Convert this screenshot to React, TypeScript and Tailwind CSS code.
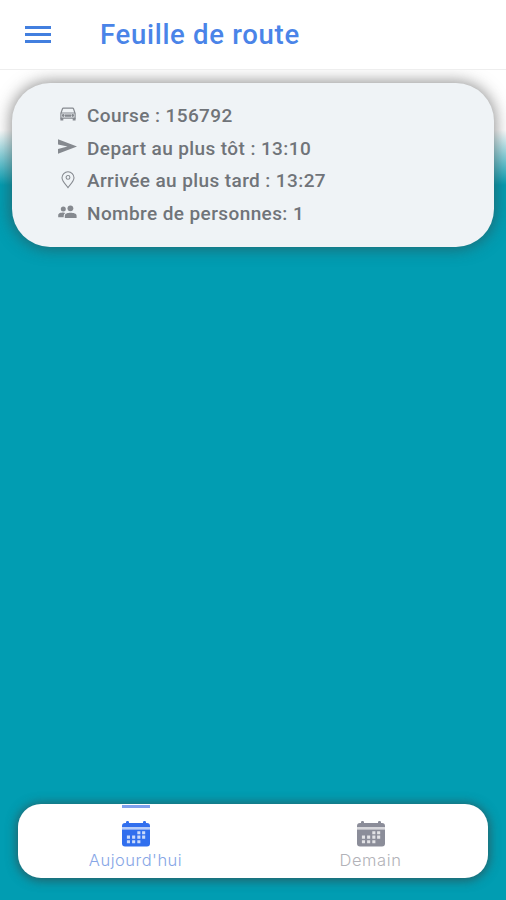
import { useState } from 'react';
import type { ReactNode } from 'react';

type Onglet = 'aujourdhui' | 'demain';

function CarIcon() {
  return (
    <svg width="16" height="15" viewBox="0 0 16 15" fill="none" stroke="currentColor" strokeWidth="1.2">
      <path d="M.9 6.3 2.5 1.8Q2.7 1.2 3.4 1.2H12.6Q13.3 1.2 13.5 1.8L15.1 6.3V11.2H.9ZM1.2 6H14.8" />
      <path d="M1 11v2h1.7V11M13.3 11v2h1.7V11" fill="currentColor" />
      <path d="M5 8.6h6" strokeWidth="2.4" />
      <circle cx="3.3" cy="8.5" r=".8" fill="currentColor" />
      <circle cx="12.7" cy="8.5" r=".8" fill="currentColor" />
    </svg>
  );
}

function SendIcon() {
  return (
    <svg width="19" height="16" viewBox="0 0 19 16" fill="currentColor">
      <path d="M0 .2 19 7.4 0 14.8V9.9L9.5 7.4 0 5.4Z" />
    </svg>
  );
}

function PinIcon() {
  return (
    <svg width="14" height="18" viewBox="0 0 14 18" fill="none" stroke="currentColor" strokeWidth="1.05">
      <path d="M7 16.6C5.6 14.4 1 10.4 1 6.7A6 5.9 0 0 1 13 6.7C13 10.4 8.4 14.4 7 16.6Z" />
      <circle cx="7" cy="6.4" r="1.9" />
    </svg>
  );
}

function PeopleIcon() {
  return (
    <svg width="19" height="14" viewBox="0 0 19 14" fill="currentColor">
      <circle cx="5.3" cy="3.9" r="2.5" />
      <circle cx="12.4" cy="3.3" r="2.9" />
      <path d="M6.8 13V10.8C6.8 8.6 9.8 7.8 12.6 7.8S18.6 8.6 18.6 10.8V13Z" />
      <path d="M.2 12.2V10.4C.2 8.2 2.9 7.6 5.2 7.6Q6.5 7.6 7.3 7.9Q5.7 9 5.7 10.8V12.2Z" />
    </svg>
  );
}

function CalendarIcon() {
  return (
    <svg width="28" height="26" viewBox="0 0 28 26">
      <path
        d="M4 2V1.2Q4 0 5.2 0H5.8Q7 0 7 1.2V2H21V1.2Q21 0 22.2 0H22.8Q24 0 24 1.2V2H25Q28 2 28 5V6H0V5Q0 2 3 2Z"
        fill="currentColor"
      />
      <path d="M0 6h28v2.5H0Z" fill="currentColor" opacity=".35" />
      <path d="M0 8.5h28V22.5Q28 25.5 25 25.5H3Q0 25.5 0 22.5Z" fill="currentColor" />
      <g fill="#fff" opacity=".75">
        <path d="M15.3 10.2h3.1v3.1h-3.1zM20.1 10.2h3.1v3.1h-3.1z" />
        <path d="M4.9 14.6H8v3.1H4.9zM10.1 14.6h3.1v3.1h-3.1zM15.3 14.6h3.1v3.1h-3.1zM20.1 14.6h3.1v3.1h-3.1z" />
        <path d="M4.9 19.2H8v3.1H4.9zM10.1 19.2h3.1v3.1h-3.1zM15.3 19.2h3.1v3.1h-3.1z" />
      </g>
    </svg>
  );
}

function Ligne({ icon, children }: { icon: ReactNode; children: ReactNode }) {
  return (
    <li className="flex h-[32.7px] items-center">
      <span className="mr-[9px] flex h-5 w-[21px] -translate-y-[2px] items-center justify-center text-[#85898f]">{icon}</span>
      <span className="whitespace-nowrap">{children}</span>
    </li>
  );
}

export default function FeuilleDeRoute() {
  const [onglet, setOnglet] = useState<Onglet>('aujourdhui');

  return (
    <div className="flex h-[900px] flex-col overflow-hidden bg-[#019db2] font-['Roboto',sans-serif]">
      <header className="flex h-[70px] shrink-0 items-center border-b border-[#eeeeee] bg-white pl-[25px]">
        <button aria-label="Menu" className="flex w-[26px] flex-col gap-[4px]">
          <span className="h-[2.7px] bg-[#427fdf]" />
          <span className="h-[2.7px] bg-[#427fdf]" />
          <span className="h-[2.7px] bg-[#427fdf]" />
        </button>
        <h1 className="ml-[49px] text-[27.5px] font-medium tracking-[0.7px] text-[#4a84e8]">Feuille de route</h1>
      </header>

      <main className="flex flex-1 flex-col justify-between overflow-hidden bg-[linear-gradient(to_bottom,#fff_0,#fff_60px,#019db2_115px)] pt-[13px] pb-[22px]">
        <section className="mx-[12px] h-[164px] rounded-[38px] bg-[#eff3f6] pt-[17px] pl-[45px] shadow-[0_0_16px_1px_rgba(60,60,60,0.6)]">
          <ul className="text-[19px] font-medium tracking-[0.4px] text-[#707479]">
            <Ligne icon={<CarIcon />}>Course : 156792</Ligne>
            <Ligne icon={<SendIcon />}>Depart au plus tôt : 13:10</Ligne>
            <Ligne icon={<PinIcon />}>Arrivée au plus tard : 13:27</Ligne>
            <Ligne icon={<PeopleIcon />}>Nombre de personnes: 1</Ligne>
          </ul>
        </section>

        <nav className="mx-[18px] flex h-[74px] rounded-[23px] bg-white font-['Inter',sans-serif] text-[16.5px] font-light shadow-[0_1px_11px_1px_rgba(60,60,60,0.7)]">
          <button
            onClick={() => setOnglet('aujourdhui')}
            className={`flex flex-1 flex-col items-center ${onglet === 'aujourdhui' ? 'text-[#316fee]' : 'text-[#8b8d99]'}`}
          >
            <span className={`mt-px mb-[13px] h-[3px] w-[28px] ${onglet === 'aujourdhui' ? 'bg-[#7fa1ed]' : ''}`} />
            <CalendarIcon />
            <span className={`mt-px tracking-[0.5px] ${onglet === 'aujourdhui' ? 'text-[#86a6e6]' : 'text-[#b2b2b8]'}`}>Aujourd'hui</span>
          </button>
          <button
            onClick={() => setOnglet('demain')}
            className={`flex flex-1 flex-col items-center ${onglet === 'demain' ? 'text-[#316fee]' : 'text-[#8b8d99]'}`}
          >
            <span className={`mt-px mb-[13px] h-[3px] w-[28px] ${onglet === 'demain' ? 'bg-[#7fa1ed]' : ''}`} />
            <CalendarIcon />
            <span className={`mt-px tracking-[0.6px] ${onglet === 'demain' ? 'text-[#86a6e6]' : 'text-[#b2b2b8]'}`}>Demain</span>
          </button>
        </nav>
      </main>
    </div>
  );
}
